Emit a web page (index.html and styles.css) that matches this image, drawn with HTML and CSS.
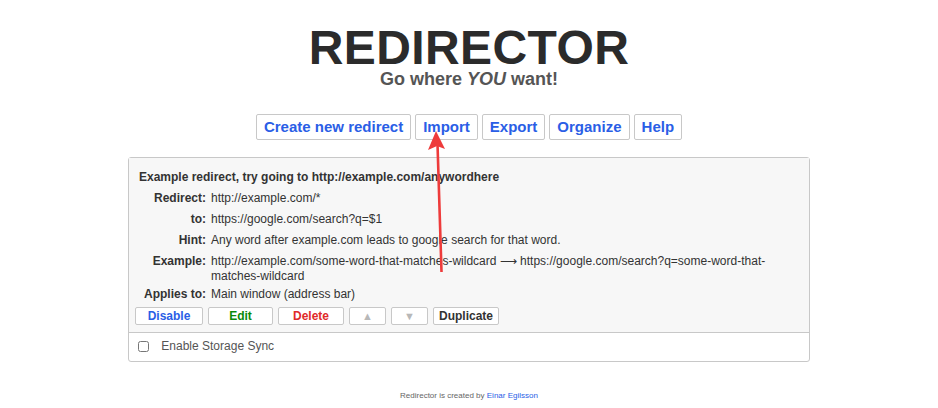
FILE: index.html
```html
<!DOCTYPE html>
<html lang="en">
<head>
<meta charset="UTF-8">
<title>Redirector</title>
<link rel="stylesheet" href="styles.css">
</head>
<body>
<div class="page">
<div class="header">
<h1 class="logo">REDIRECTOR</h1>
<div class="slogan">Go where <i>YOU</i> want!</div>
</div>

<div class="menu">
<button class="menu-btn">Create new redirect</button>
<button class="menu-btn">Import</button>
<button class="menu-btn">Export</button>
<button class="menu-btn">Organize</button>
<button class="menu-btn">Help</button>
</div>

<div class="redirect-list">
<div class="redirect-row">
<div class="redirect-title">Example redirect, try going to http://example.com/anywordhere</div>
<div class="info">
<div class="info-label">Redirect:</div>
<div class="info-value">http://example.com/*</div>
<div class="info-label">to:</div>
<div class="info-value">https://google.com/search?q=$1</div>
<div class="info-label">Hint:</div>
<div class="info-value">Any word after example.com leads to google search for that word.</div>
<div class="info-label">Example:</div>
<div class="info-value wrapped">http://example.com/some-word-that-matches-wildcard &#x27F6; https://google.com/search?q=some-word-that-matches-wildcard</div>
<div class="info-label">Applies to:</div>
<div class="info-value">Main window (address bar)</div>
</div>
<div class="actions">
<button class="act disable">Disable</button>
<button class="act edit">Edit</button>
<button class="act delete">Delete</button>
<button class="act arrow">&#9650;</button>
<button class="act arrow">&#9660;</button>
<button class="act duplicate">Duplicate</button>
</div>
</div>
<div class="sync-row">
<label><input type="checkbox" class="sync-check"> Enable Storage Sync</label>
</div>
</div>

<div class="footer">Redirector is created by <a href="#">Einar Egilsson</a></div>
</div>

<!-- annotation arrow pointing at Import -->
<svg class="pointer" width="938" height="408" viewBox="0 0 938 408">
<line x1="437.5" y1="144" x2="441.5" y2="272" stroke="#ee3b3b" stroke-width="2.6"/>
<polygon points="436,131 428,150 437,146 445,149" fill="#ee3b3b"/>
</svg>
</body>
</html>
```

FILE: styles.css
```css
body {
    margin: 0;
    background-color: #fff;
    font-family: "Liberation Sans", Arial, sans-serif;
    color: #333;
}

.page {
    width: 938px;
    height: 408px;
}

.header {
    text-align: center;
    padding-top: 26px;
}

.logo {
    margin: 0;
    font-size: 48px;
    line-height: 44px;
    font-weight: bold;
    letter-spacing: 0.4px;
    color: #2b2b2b;
}

.slogan {
    font-size: 18px;
    line-height: 18px;
    font-weight: bold;
    color: #555;
}

.menu {
    display: flex;
    justify-content: center;
    gap: 4px;
    margin-top: 26px;
}

.menu-btn {
    font-family: inherit;
    font-size: 15px;
    line-height: 18px;
    font-weight: bold;
    color: #2a5ee6;
    background: #fff;
    border: 1px solid #c8c8c8;
    border-radius: 2px;
    padding: 3px 7px;
    cursor: pointer;
}

.redirect-list {
    width: 680px;
    margin: 17px auto 0;
    border: 1px solid #c8c8c8;
    border-radius: 3px;
    font-size: 12px;
}

.redirect-row {
    background: #f7f7f7;
    padding: 12px 6px 7px;
    border-bottom: 1px solid #c8c8c8;
}

.redirect-title {
    font-weight: bold;
    line-height: 15px;
    padding-left: 4px;
    margin-bottom: 6px;
}

.info {
    display: grid;
    grid-template-columns: 67px 1fr;
    column-gap: 5px;
    row-gap: 6px;
    line-height: 15px;
    padding-left: 4px;
    padding-right: 24px;
}

.info-label {
    text-align: right;
    font-weight: bold;
}

.info-value.wrapped {
    margin-bottom: -3px;
}

.actions {
    display: flex;
    gap: 5px;
    margin-top: 5px;
}

.act {
    font-family: inherit;
    font-size: 12px;
    font-weight: bold;
    line-height: 14px;
    width: 66px;
    padding: 1px 0;
    background: #fff;
    border: 1px solid #c8c8c8;
    border-radius: 2px;
    cursor: pointer;
}

.disable { color: #2a5ee6; width: 68px; }
.edit { color: #0a8a0a; width: 65px; }
.delete { color: #e02a2a; }
.duplicate { color: #333; }

.arrow {
    width: 37px;
    color: #b8b8b8;
    font-size: 11px;
}

.sync-row {
    padding: 6px 9px 7px;
    color: #555;
    line-height: 15px;
}

.sync-check {
    width: 11px;
    height: 11px;
    margin: 0 9px 0 0;
    vertical-align: -2px;
}

.footer {
    text-align: center;
    font-size: 8px;
    color: #666;
    margin-top: 29px;
}

.footer a {
    color: #2a5ee6;
    text-decoration: none;
}

.pointer {
    position: absolute;
    top: 0;
    left: 0;
    pointer-events: none;
}
```
